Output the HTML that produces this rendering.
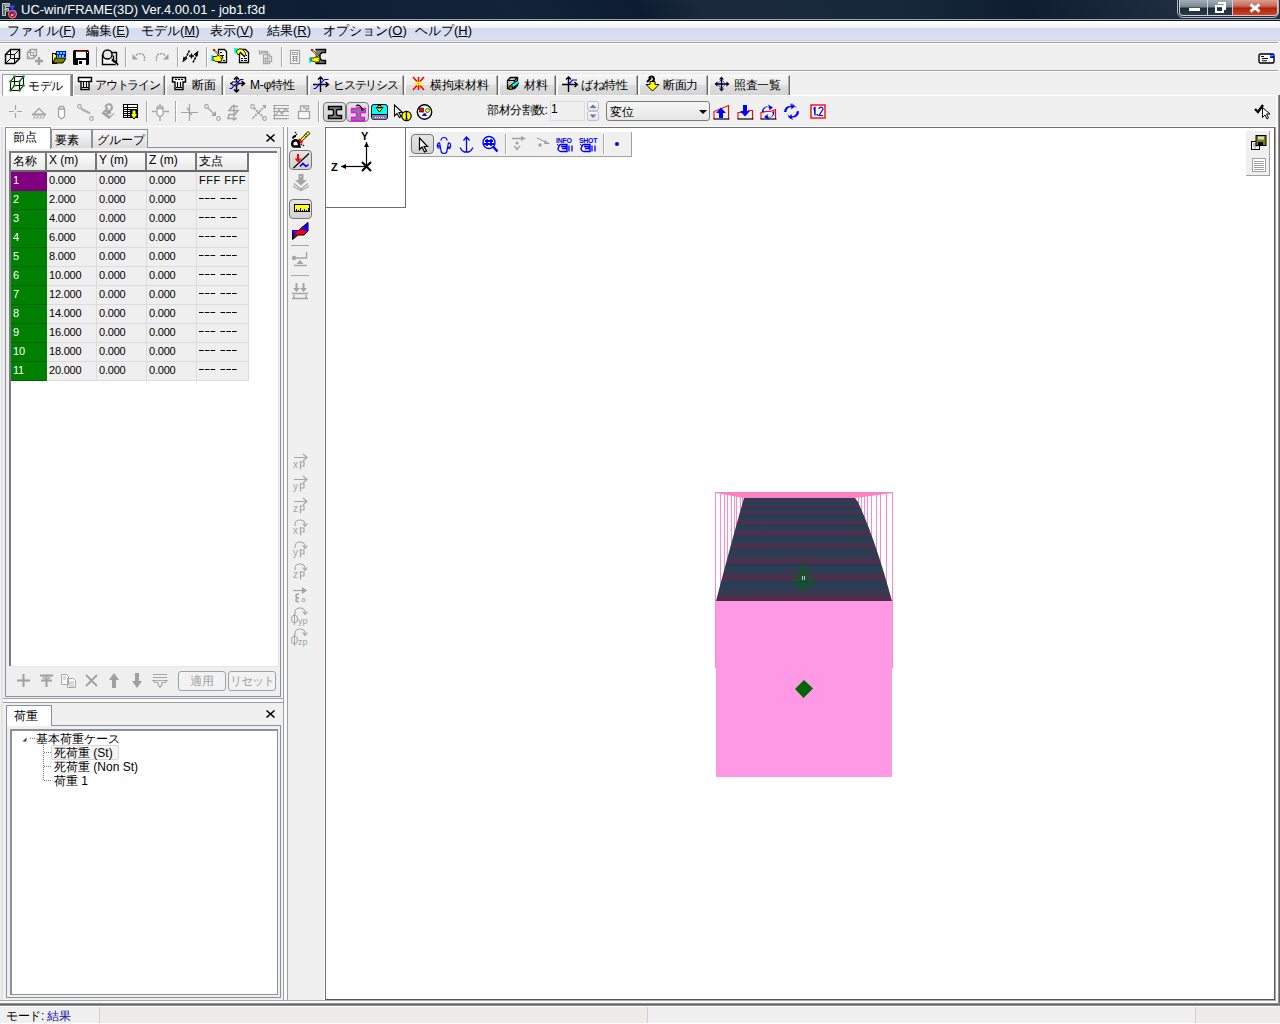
<!DOCTYPE html>
<html><head><meta charset="utf-8">
<style>
*{margin:0;padding:0;box-sizing:border-box}
html,body{width:1280px;height:1024px;overflow:hidden;background:#f0f0f0;font-family:"Liberation Sans",sans-serif;font-size:12px;color:#000}
.a{position:absolute}
svg{position:absolute;overflow:visible}
#title{left:0;top:0;width:1280px;height:21px;background:linear-gradient(60deg,#142438 0%,#0f1f33 25%,#12233a 40%,#0d1c30 50%,#1a2a3c 55%,#18283b 70%,#0e1d30 80%,#1c2c3e 90%,#223245 100%);border-bottom:1px solid #0e1620}
#title:after{content:"";position:absolute;left:0;top:19px;width:1280px;height:1px;background:#9aa4b0}
#title .t{left:21px;top:2px;color:#fff;font-size:13px}
#menu{left:0;top:21px;width:1280px;height:21px;background:linear-gradient(#ffffff 0,#f0f2f8 33%,#d5dcef 34%,#dbe1f2 90%,#b8c0d4 95%,#f0f0f0 96%)}
#menu span{position:absolute;top:1px;font-size:13px;color:#000}
.vs{position:absolute;width:2px;border-left:1px solid #a8a8a8;border-right:1px solid #fff}
.hl{position:absolute;height:2px;border-top:1px solid #a0a0a0;border-bottom:1px solid #fff}
.tab{position:absolute;top:75px;height:20px;background:linear-gradient(#f4f4f4,#ececec 45%,#dedede 50%,#d4d4d4);border-left:1px solid #fff;border-top:1px solid #fff;border-right:1px solid #6a6a6a;box-shadow:inset -1px 0 #a8a8a8;font-size:12px;white-space:nowrap;letter-spacing:-0.3px}
.tab span{position:absolute;top:1px}
.tab.act{top:74px;height:22px;background:#fff;border-bottom:none}
.tab2{position:absolute;height:19px;background:linear-gradient(#f8f8f8,#ececec 50%,#dcdcdc);border:1px solid #8c8f9c;border-bottom:none;font-size:12px;white-space:nowrap}
.tab2 span{position:absolute;top:2px}
.g{position:absolute;font-size:12px}
.cell{position:absolute;height:19px;border-right:1px solid #dcdcdc;border-bottom:1px solid #dcdcdc;background:#efefef;padding:2px 0 0 2px;white-space:nowrap;letter-spacing:-0.2px;font-size:11px;line-height:12px}
.hd{position:absolute;top:153px;height:19px;background:linear-gradient(#fcfcfc,#e8e8e8);border-right:2px solid #777;border-bottom:2px solid #666;padding:0 0 0 2px;white-space:nowrap}
.nm{background:#008000;color:#fff;border-right:1px solid #008000;border-bottom:1px solid #006400}
.btn{position:absolute;border:1px solid #9aa2ac;border-radius:3px;background:#f2f2f2;color:#a0a0a0;font-size:12px;text-align:center;padding-top:1px}
.pr{position:absolute;border:1px solid #777;border-radius:3px;background:linear-gradient(#e4e4e4,#d2d2d2)}
.vi{color:#9a9a9a;font-size:11px;position:absolute;left:291px;line-height:10px}
</style></head><body>
<!-- ===== Title bar ===== -->
<div id="title" class="a">
  <svg style="left:1px;top:2px" width="16" height="17"><path d="M1.5 1.5h7v3h-4v2h3v2.5h-3v4.5h-3z" fill="#4a6a62" stroke="#c8c8c0" stroke-width="1"/><path d="M3 3h5M3 7.5h3" stroke="#e8f0ec" stroke-width="0.8"/><path d="M8.5 4.5h4l-2 2.5" stroke="#4040ff" stroke-width="1.8" fill="none"/><circle cx="11.5" cy="12" r="4" fill="#e00000" stroke="#ffb0b0" stroke-width="0.8"/><path d="M9 10a2.5 2 0 1 1 2 3" stroke="#4060ff" stroke-width="1.5" fill="none"/><circle cx="11" cy="13" r="1" fill="#c0ffff"/></svg>
  <div class="a t">UC-win/FRAME(3D) Ver.4.00.01 - job1.f3d</div>
  <div class="a" style="left:1177px;top:-2px;width:102px;height:20px;border:1px solid #aab4be;border-radius:0 0 6px 6px"></div>
  <div class="a" style="left:1179px;top:0;width:28px;height:16px;border:1px solid #c8d0d8;border-top:none;border-right:none;border-radius:0 0 0 4px;background:linear-gradient(#a4aeb8,#7a8692 45%,#1d2b39 55%,#2c3a48)"><div class="a" style="left:9px;top:8px;width:11px;height:3px;background:#fff"></div></div>
  <div class="a" style="left:1207px;top:0;width:26px;height:16px;border:1px solid #c8d0d8;border-top:none;background:linear-gradient(#a4aeb8,#7a8692 45%,#1d2b39 55%,#2c3a48)"><div class="a" style="left:7px;top:5px;width:9px;height:8px;border:2px solid #fff"></div><div class="a" style="left:10px;top:2px;width:8px;height:8px;border-top:2px solid #fff;border-right:2px solid #fff"></div></div>
  <div class="a" style="left:1233px;top:0;width:45px;height:16px;border:1px solid #e8c0b8;border-top:none;border-left:none;border-radius:0 0 4px 0;background:linear-gradient(#d8a090,#c86a58 40%,#b02010 55%,#c84828)"><svg style="left:16px;top:3px" width="12" height="10"><path d="M1.5 1.5L10.5 8.5M10.5 1.5L1.5 8.5" stroke="#fff" stroke-width="3"/></svg></div>
</div>
<!-- ===== Menu ===== -->
<div id="menu" class="a">
  <span style="left:7px">ファイル(<u>F</u>)</span>
  <span style="left:86px">編集(<u>E</u>)</span>
  <span style="left:141px">モデル(<u>M</u>)</span>
  <span style="left:210px">表示(<u>V</u>)</span>
  <span style="left:267px">結果(<u>R</u>)</span>
  <span style="left:323px">オプション(<u>O</u>)</span>
  <span style="left:415px">ヘルプ(<u>H</u>)</span>
</div>
<div class="hl" style="left:0;top:42px;width:1278px"></div>
<!-- TOOLBAR1 -->
<svg style="left:4px;top:48px" width="17" height="17"><g fill="none" stroke="#000" stroke-width="1"><path d="M6.5 1.5h9v9h-9z M1.5 6.5h9v9h-9z M1.5 6.5l5-5 M10.5 6.5l5-5 M1.5 15.5l5-5 M10.5 15.5l5-5"/></g><path d="M1.5 6.5v9h9l5-5v-9h-9z" fill="none" stroke="#000" stroke-width="1.5"/></svg>
<svg style="left:26px;top:48px" width="18" height="18"><g fill="none" stroke="#a0a0a0" stroke-width="1"><path d="M4.5 1.5h6v6h-6z M1.5 4.5h6v6h-6z M1.5 4.5l3-3 M7.5 4.5l3-3 M1.5 10.5l3-3 M7.5 10.5l3-3"/></g><path d="M1.5 4.5v6h6l3-3v-6h-6z" fill="none" stroke="#a0a0a0" stroke-width="1.4"/><path d="M9 13h8M13 9v8" stroke="#a0a0a0" stroke-width="2.4"/></svg>
<svg style="left:51px;top:50px" width="16" height="14" shape-rendering="crispEdges"><rect x="5" y="1" width="10" height="6" fill="#0000ff"/><g fill="#00ffff"><rect x="6" y="2" width="2" height="2"/><rect x="9" y="2" width="2" height="2"/><rect x="12" y="2" width="2" height="2"/><rect x="5" y="5" width="2" height="2"/><rect x="8" y="5" width="2" height="2"/><rect x="11" y="5" width="2" height="2"/></g><path d="M1 3h3v1h1v9h-4z" fill="#ffff00" stroke="#000"/><path d="M2 13L4 8H15L12 13Z" fill="#808000" stroke="#000" shape-rendering="auto"/></svg>
<svg style="left:73px;top:50px" width="16" height="16" shape-rendering="crispEdges"><rect x="0" y="0" width="16" height="15" rx="1.5" fill="#000" shape-rendering="auto"/><rect x="3" y="1" width="10" height="7" fill="#fff"/><rect x="3" y="1" width="10" height="1" fill="#ff0000"/><rect x="5" y="10" width="8" height="5" fill="#fff"/><rect x="6" y="11" width="3" height="3" fill="#000"/><rect x="14" y="2" width="1" height="1" fill="#fff"/></svg>
<div class="vs" style="left:96px;top:47px;height:20px"></div>
<svg style="left:101px;top:49px" width="18" height="17"><path d="M1.5 5.5v10h13v-4" fill="#fff" stroke="#000" stroke-width="1.4"/><path d="M10 3.5h5.5v11M12.5 6.5v5" fill="none" stroke="#000" stroke-width="1.4"/><circle cx="6.5" cy="5.5" r="4.6" fill="#e6e6e6" stroke="#000" stroke-width="1.5"/><path d="M10 9l1 1" stroke="#e0e000" stroke-width="1.5"/><path d="M11 10.5l6 5.5" stroke="#000" stroke-width="2.2"/><path d="M13 14l3 2" stroke="#fff" stroke-width="0.8"/></svg>
<div class="vs" style="left:125px;top:47px;height:20px"></div>
<svg style="left:132px;top:52px" width="14" height="9"><path d="M4 3.5a4.5 3.5 0 0 1 8.5 1.5v4" fill="none" stroke="#a0a0a0" stroke-width="1.4" stroke-dasharray="2.5 0.8"/><path d="M0.5 2v5.5h5.5z" fill="#a0a0a0"/></svg>
<svg style="left:155px;top:52px" width="14" height="9"><path d="M10 3.5a4.5 3.5 0 0 0-8.5 1.5v4" fill="none" stroke="#a0a0a0" stroke-width="1.4" stroke-dasharray="2.5 0.8"/><path d="M13.5 2v5.5h-5.5z" fill="#a0a0a0"/></svg>
<div class="vs" style="left:177px;top:47px;height:20px"></div>
<svg style="left:182px;top:50px" width="17" height="13"><path d="M7.5 0.5l-4 8" stroke="#000" stroke-width="1.6" stroke-dasharray="2.5 0.8"/><path d="M0.5 12.5l1-6 4 2z" fill="#000"/><path d="M7 6h5M9.5 3.5v5" stroke="#000" stroke-width="1.3"/><path d="M11 12.5l4-8" stroke="#000" stroke-width="1.6" stroke-dasharray="2.5 0.8"/><path d="M16.5 0.5l-1 6-4-2z" fill="#000"/></svg>
<div class="vs" style="left:206px;top:47px;height:20px"></div>
<svg style="left:211px;top:48px" width="17" height="17"><path d="M7.5 1.5h6l2 2v11h-8z" fill="#fff" stroke="#000" stroke-width="1.3"/><path d="M9 4.5h2M10 7.5h3M10 12.5h1M12 12.5h2" stroke="#000"/><rect x="0" y="7" width="2" height="6" fill="#00ffff"/><path d="M2 8.5h3l2-1h4l1 2-2 1 1 2-2 1h-4l-2-1h-1z" fill="#ffff00" stroke="#000" stroke-width="0.8"/><path d="M3 2l9 9" stroke="#000" stroke-width="1.2"/><path d="M3.5 2.5l8 8" stroke="#ffff00" stroke-width="0.8"/><rect x="2" y="1" width="2" height="2" fill="#ff0000"/></svg>
<svg style="left:234px;top:48px" width="17" height="17"><path d="M5.5 1.5h6l3 3v10h-9z" fill="#fff" stroke="#000" stroke-width="1.3"/><path d="M7 10.5h2M10 10.5h3M7 12.5h2M10 12.5h3M12 7.5h1" stroke="#000"/><path d="M0 0h4v3l-4 3z" fill="#00ffff"/><path d="M2 3l3-2h3l3 3 1 3-2 1-4-3-2 2z" fill="#ffff00" stroke="#000" stroke-width="0.8"/><path d="M6 4l5 5" stroke="#000" stroke-width="1.2"/></svg>
<svg style="left:258px;top:49px" width="15" height="15"><path d="M1.5 1v3.5h2v-2h6v9" fill="none" stroke="#a8a8a8" stroke-width="1.3"/><path d="M5.5 5.5h6v2h2v5h-2v2h-6z" fill="none" stroke="#a8a8a8" stroke-width="1.3"/><path d="M5 9.5h7M5 12h7M7.5 8v6M9.5 8v6" stroke="#a8a8a8" stroke-width="1"/><path d="M5 3.5h4" stroke="#a8a8a8" stroke-width="1.2"/></svg>
<div class="vs" style="left:281px;top:47px;height:20px"></div>
<svg style="left:290px;top:50px" width="11" height="14"><rect x="0.5" y="0.5" width="9" height="13" fill="#fff" stroke="#a0a0a0" stroke-width="1.2"/><rect x="2.5" y="2.5" width="5" height="2" fill="none" stroke="#a0a0a0"/><path d="M2 6.5h6M2 8.5h6M2 10.5h6M3.5 6v6M6.5 6v6" stroke="#a0a0a0" stroke-width="1"/></svg>
<svg style="left:309px;top:48px" width="18" height="17"><path d="M6.5 1.5h10v3h-3.5l-2 2v4l2 2h3.5v3h-10" fill="#808080" stroke="#000" stroke-width="1.4"/><rect x="0" y="9" width="2" height="6" fill="#00ffff"/><path d="M2 10h3l2-1h3l1 1.5-1 1 1 1.5-1 1h-4l-2-1h-2z" fill="#ffff00" stroke="#000" stroke-width="0.8"/><path d="M3 2l8 8" stroke="#000" stroke-width="1.2"/><path d="M3.5 2.5l7 7" stroke="#ffff00" stroke-width="0.8"/><rect x="2" y="1" width="2" height="2" fill="#ff0000"/></svg>
<svg style="left:1258px;top:53px" width="17" height="11"><rect x="1" y="1" width="15" height="9" rx="1.5" fill="#fff" stroke="#000" stroke-width="1.4"/><path d="M3 3.5h3M4 5.5h6M4 7.8h5" stroke="#000" stroke-width="1"/><rect x="12" y="1" width="4" height="4" fill="#0000d0"/><rect x="12.5" y="2" width="3" height="1" fill="#00e0ff"/><rect x="12.5" y="3.2" width="1" height="1" fill="#00e0ff"/></svg>
<div class="hl" style="left:0;top:70px;width:1278px"></div>
<!-- TABS -->
<div class="a" style="left:0;top:95px;width:1278px;height:1px;background:#fff"></div>
<div class="tab" style="left:73px;width:92px"><span class="a" style="left:3px;top:0px"><svg width="16" height="16"><path d="M1.5 1.5h13v4h-2.5v8h-8v-8h-2.5z" fill="#fff" stroke="#000" stroke-width="1.4"/><path d="M2 5.5h12M6.5 6v6M9.5 6v6M4.5 11.5h7" stroke="#000" stroke-width="1.2"/></svg></span><span style="left:21px;letter-spacing:-1.2px">アウトライン</span></div>
<div class="tab" style="left:166px;width:57px"><span class="a" style="left:4px;top:0px"><svg width="16" height="16"><path d="M1.5 1.5h13v4.5h-2.5v7.5h-8v-7.5h-2.5z" fill="#fff" stroke="#000" stroke-width="1.4"/><path d="M4 3.5h2M7 3.5h2M10 3.5h2M6.5 6v5M9.5 6v5M5 11.5h6" stroke="#000" stroke-width="1.2"/></svg></span><span style="left:25px">断面</span></div>
<div class="tab" style="left:224px;width:84px"><span class="a" style="left:4px;top:0px"><svg width="17" height="17"><path d="M7.5 1v15M5 3.5l2.5-2.5 2.5 2.5M5 13.5l2.5 2.5 2.5-2.5M1 7.5h14M12.5 5l3 2.5-3 2.5" stroke="#000" stroke-width="1.5" fill="none"/><path d="M3 6h6v3h-6z" fill="#fff" stroke="#000" stroke-width="1"/><path d="M0.5 12.5h2l9-9h3" stroke="#0000ff" stroke-width="1.2" fill="none"/></svg></span><span style="left:25px">M-φ特性</span></div>
<div class="tab" style="left:309px;width:95px"><span class="a" style="left:3px;top:0px"><svg width="17" height="17"><path d="M7.5 16v-15M5 3.5l2.5-2.5 2.5 2.5M0 8.5h15M12.5 6l3 2.5-3 2.5" stroke="#000" stroke-width="1.4" fill="none"/><path d="M0.5 12.5h2l9-9h4" stroke="#0000ff" stroke-width="1.2" fill="none"/></svg></span><span style="left:23px;letter-spacing:-1.2px">ヒステリシス</span></div>
<div class="tab" style="left:405px;width:93px"><span class="a" style="left:6px;top:0px"><svg width="13" height="15"><path d="M1 1l4 4.5M12 1l-4 4.5M1 14l4-4.5M12 14l-4-4.5M6.5 1v13" stroke="#ff0000" stroke-width="1.6"/><path d="M3 6.5h7M3 8.5h7" stroke="#ffff00" stroke-width="1.3"/></svg></span><span style="left:24px">横拘束材料</span></div>
<div class="tab" style="left:499px;width:57px"><span class="a" style="left:6px;top:0px"><svg width="14" height="15"><path d="M1.5 4.5l3-3h7v8l-3 3h-7z" fill="#c8c8c8" stroke="#000" stroke-width="1.3"/><path d="M1.5 4.5h7v8M8.5 4.5l3-3" stroke="#000" stroke-width="1.2" fill="none"/><path d="M5 11l7-5" stroke="#000" stroke-width="4"/><path d="M5 11l7-5" stroke="#00ffff" stroke-width="2.2"/><rect x="3" y="10" width="3.5" height="3.5" fill="#808000" stroke="#000" stroke-width="0.8"/></svg></span><span style="left:24px">材料</span></div>
<div class="tab" style="left:557px;width:81px"><span class="a" style="left:4px;top:0px"><svg width="16" height="16"><path d="M6.5 16v-15M4 3.5l2.5-2.5 2.5 2.5M0 8.5h15M12.5 6l3 2.5-3 2.5" stroke="#000" stroke-width="1.4" fill="none"/><path d="M7 8l3.5-4h4.5" stroke="#0000ff" stroke-width="1.2" fill="none"/></svg></span><span style="left:23px">ばね特性</span></div>
<div class="tab" style="left:639px;width:69px"><span class="a" style="left:5px;top:0px"><svg width="15" height="16"><path d="M2 6l4-4M4 2.5a2.5 2.5 0 1 1 3 3" stroke="#000" stroke-width="2" fill="none"/><path d="M1 8.5h4v-3h5v3h4l-6.5 6.5z" fill="#ffff00" stroke="#000" stroke-width="1"/></svg></span><span style="left:23px">断面力</span></div>
<div class="tab" style="left:709px;width:81px"><span class="a" style="left:4px;top:0px"><svg width="16" height="16"><path d="M7.5 0.5l-2.5 3h5zM7.5 15.5l-2.5-3h5zM0.5 8l3-2.5v5zM15.5 8l-3-2.5v5z" fill="#000"/><path d="M7.5 3v10M3 8h10" stroke="#000" stroke-width="1.3"/><path d="M3.5 8l4-4.5 4 4.5-4 4.5z" fill="none" stroke="#0000ff" stroke-width="1" stroke-dasharray="1.2 0.8"/></svg></span><span style="left:24px">照査一覧</span></div>
<div class="tab act" style="left:2px;width:71px;border-right:2px solid #7c8088;border-left-color:#9ca0a8;border-top-color:#9ca0a8"><svg style="left:6px;top:0px" width="17" height="17"><path d="M1.5 6.5h9v9h-9z M5.5 1.5h9v9h-9z M1.5 6.5l4-5 M10.5 6.5l4-5 M1.5 15.5l4-5 M10.5 15.5l4-5" fill="none" stroke="#000" stroke-width="1.1"/><g fill="#00a000"><circle cx="1.5" cy="6.5" r="1.3"/><circle cx="10.5" cy="6.5" r="1.3"/><circle cx="5.5" cy="1.5" r="1.3"/><circle cx="14.5" cy="1.5" r="1.3"/><circle cx="1.5" cy="15.5" r="1.3"/><circle cx="10.5" cy="15.5" r="1.3"/><circle cx="5.5" cy="10.5" r="1.3"/><circle cx="14.5" cy="10.5" r="1.3"/></g></svg><span style="left:25px;top:3px;font-size:12px">モデル</span></div>
<!-- TOOLBAR2 -->
<svg style="left:8px;top:104px" width="16" height="16"><path d="M1 7.5h5M9 7.5h5M7.5 1v5M7.5 9v5" stroke="#a4a4a4" stroke-width="1.2"/></svg>
<svg style="left:31px;top:107px" width="16" height="13"><path d="M2.5 7L8 1.5 13.5 7" fill="none" stroke="#a4a4a4" stroke-width="1.3"/><path d="M1 7.5h14" stroke="#a4a4a4" stroke-width="2"/><path d="M2.5 12l2-3M5.5 12l2-3M8.5 12l2-3M11.5 12l2-3" stroke="#a4a4a4" stroke-width="1.1"/></svg>
<svg style="left:56px;top:105px" width="11" height="15"><path d="M2.5 3.5l1.5-2h3l1.5 2v8l-3 2.5-3-2.5z" fill="#fff" stroke="#a4a4a4" stroke-width="1.3"/><path d="M3 4h5" stroke="#a4a4a4" stroke-width="1.5"/></svg>
<svg style="left:77px;top:104px" width="17" height="17"><path d="M4 4l1 2 1-1 1 2 1-1 1 2 1-1 1 2 1-1 1 2" fill="none" stroke="#a4a4a4" stroke-width="1.2"/><circle cx="2.5" cy="2.5" r="1.8" fill="#fff" stroke="#a4a4a4" stroke-width="1.2"/><circle cx="14.5" cy="14.5" r="1.8" fill="#fff" stroke="#a4a4a4" stroke-width="1.2"/></svg>
<svg style="left:100px;top:104px" width="16" height="16"><path d="M3 9l5-5" stroke="#a4a4a4" stroke-width="2.2"/><path d="M6 4a3 3 0 1 1 4 2" fill="none" stroke="#a4a4a4" stroke-width="2"/><path d="M1 9h5l4 3 4-3h1l-6 6z M6 6h5v4h-5z" fill="#a4a4a4"/></svg>
<svg style="left:123px;top:104px" width="16" height="16" shape-rendering="crispEdges"><rect x="0" y="0" width="15" height="14" fill="#000"/><rect x="1" y="1" width="3" height="2" fill="#fff"/><rect x="5" y="1" width="9" height="2" fill="#fff"/><g fill="#fff"><rect x="1" y="4" width="3" height="1"/><rect x="5" y="4" width="9" height="1"/><rect x="1" y="6" width="3" height="1"/><rect x="5" y="6" width="2" height="1"/><rect x="1" y="8" width="3" height="1"/><rect x="5" y="8" width="2" height="1"/><rect x="1" y="10" width="3" height="1"/><rect x="5" y="10" width="2" height="1"/><rect x="1" y="12" width="3" height="1"/><rect x="5" y="12" width="2" height="1"/></g><path d="M9 6h4v4h2l-4 5-4-5h2z" fill="#ffff00" stroke="#000" stroke-width="1" shape-rendering="auto"/></svg>
<div class="vs" style="left:146px;top:101px;height:21px"></div>
<svg style="left:152px;top:104px" width="17" height="17"><path d="M0 7.5h4M12 7.5h5M8 0v3M8 13v4" stroke="#a4a4a4" stroke-width="1.3"/><path d="M5 3.5l1-1h4l1 1v7l-3 2.5-3-2.5z" fill="#fff" stroke="#a4a4a4" stroke-width="1.3"/><path d="M5 4.5h6" stroke="#a4a4a4" stroke-width="1.6"/></svg>
<div class="vs" style="left:175px;top:101px;height:21px"></div>
<svg style="left:181px;top:104px" width="17" height="17"><path d="M0 8.5h17M8.5 0v17" stroke="#a4a4a4" stroke-width="1.2"/><path d="M6 4l2.5 3M11 11l-2.5-2.5" stroke="#a4a4a4" stroke-width="1.2"/></svg>
<svg style="left:204px;top:104px" width="17" height="17"><circle cx="2.5" cy="2.5" r="1.8" fill="#fff" stroke="#a4a4a4" stroke-width="1.2"/><path d="M4 4l7 7" stroke="#a4a4a4" stroke-width="1.3"/><path d="M12 12v-5l-5 5z" fill="#a4a4a4"/><circle cx="14.5" cy="14.5" r="1.8" fill="#fff" stroke="#a4a4a4" stroke-width="1.2"/></svg>
<svg style="left:227px;top:104px" width="15" height="17"><path d="M11 2.5h-6l-3 4h9l-3 4h-6l-1 4h9" fill="none" stroke="#a4a4a4" stroke-width="1.5"/><circle cx="7" cy="2" r="1.6" fill="#a4a4a4"/><circle cx="7" cy="15" r="1.6" fill="#a4a4a4"/><path d="M7 4v9" stroke="#a4a4a4" stroke-width="1.4"/></svg>
<svg style="left:250px;top:104px" width="17" height="17"><path d="M2 2l13 13M15 2l-13 13" stroke="#a4a4a4" stroke-width="2" stroke-dasharray="2 1"/><circle cx="2.5" cy="2.5" r="1.8" fill="#fff" stroke="#a4a4a4" stroke-width="1.2"/><circle cx="14.5" cy="14.5" r="1.8" fill="#fff" stroke="#a4a4a4" stroke-width="1.2"/><path d="M12 1l4 0 0 4z" fill="#a4a4a4"/></svg>
<svg style="left:273px;top:104px" width="17" height="17"><path d="M0 1.5h16M0 14.5h16M1.5 1v15M0 4.5h16M0 7.5h16M0 11.5h16" stroke="#a4a4a4" stroke-width="1"/><path d="M4 16v-2M7 16v-2M10 16v-2M13 16v-2" stroke="#a4a4a4"/><path d="M3 11l3-5 3 4 3-5 3 2" stroke="#a4a4a4" stroke-width="1.3" fill="none"/></svg>
<svg style="left:297px;top:104px" width="15" height="16"><rect x="1.5" y="7.5" width="11" height="7" fill="#fff" stroke="#a4a4a4" stroke-width="1.3"/><path d="M3.5 7v-5h8v3h-2v2M6 4h3" stroke="#a4a4a4" stroke-width="1.3" fill="none"/></svg>
<div class="vs" style="left:318px;top:101px;height:21px"></div>
<div class="pr" style="left:323px;top:102px;width:23px;height:20px;border-radius:4px"><svg style="left:3px;top:2px" width="16" height="15"><path d="M1.5 1.5h13v3h-4l-1 1v4l1 1h4v3h-13v-3h4l1-1v-4l-1-1h-4z" fill="#808080" stroke="#000" stroke-width="1.4"/></svg></div>
<div class="pr" style="left:346px;top:102px;width:23px;height:20px;border-radius:4px"><svg style="left:2px;top:1px" width="18" height="17"><path d="M2.5 4.5h5l1-1h2l1 1h5v4h-4l-1 1v3l1 1h3v3h-13v-3h4l1-1v-3l-1-1h-4z" fill="#808080" stroke="#ff00ff" stroke-width="1.3"/><path d="M7 2l2-1 2 1 3 4-2 0" stroke="#000" fill="none" stroke-width="1.2"/></svg></div>
<svg style="left:371px;top:104px" width="17" height="16"><rect x="0.5" y="0.5" width="16" height="15" rx="2.5" fill="#00ffff" stroke="#000"/><path d="M1 11h15v3l-2 1.5h-11l-2-1.5z" fill="#8080c0"/><path d="M1 10.5h15" stroke="#000"/><path d="M4 13.5h9" stroke="#fff" stroke-dasharray="1 1"/><path d="M5 3.5h7l-3.5 4.5z M7 1.5h3v2.5h-3z" fill="#ffff00" stroke="#000" stroke-width="0.9"/></svg>
<svg style="left:393px;top:104px" width="19" height="18"><path d="M1.5 1v11l2.5-2.5 2.5 4 1.5-1-2-4h3.5z" fill="#fff" stroke="#000" stroke-width="1.1"/><circle cx="13.5" cy="12" r="4.7" fill="#ffff00" stroke="#000" stroke-width="1.2"/><path d="M13.5 10.5v4.5M12.5 10.5h1M12.5 15h2" stroke="#000" stroke-width="1.3"/><circle cx="13.5" cy="8.8" r="0.9"/></svg>
<svg style="left:416px;top:104px" width="17" height="17"><circle cx="8.5" cy="8" r="7.2" fill="#fff" stroke="#000" stroke-width="1.4"/><rect x="3.5" y="4" width="4" height="4" fill="#ff0000" stroke="#000" stroke-width="0.6"/><circle cx="11.5" cy="6.5" r="2" fill="#ffff00" stroke="#000" stroke-width="0.6"/><path d="M5.5 12h6l-3-3z" fill="#0000ff"/><path d="M7 8.5l1.5 1.5M10.5 8.5l-1.5 1.5" stroke="#000" stroke-width="0.6"/></svg>
<div class="a" style="left:487px;top:102px;font-size:12px;letter-spacing:-0.5px">部材分割数:</div><div class="a" style="left:551px;top:102px;font-size:12px">1</div>
<div class="a" style="left:550px;top:101px;width:35px;height:20px;border:1px solid #d8dde4;background:transparent"></div>
<div class="a" style="left:587px;top:101px;width:12px;height:10px;border:1px solid #c0c4c8;border-radius:2px;background:linear-gradient(#fafafa,#e6e6e6)"><svg style="left:1px;top:2px" width="8" height="5"><path d="M0.5 4l3.5-3.5 3.5 3.5z" fill="#5a7ab8"/></svg></div><div class="a" style="left:587px;top:111px;width:12px;height:10px;border:1px solid #c0c4c8;border-radius:2px;background:linear-gradient(#fafafa,#e6e6e6)"><svg style="left:1px;top:2px" width="8" height="5"><path d="M0.5 0.5l3.5 3.5 3.5-3.5z" fill="#5a7ab8"/></svg></div>
<div class="a" style="left:606px;top:101px;width:104px;height:20px;border:1px solid #7c7c7c;border-radius:3px;background:linear-gradient(#f6f6f6,#e6e6e6)"><span class="a" style="left:3px;top:2px;font-size:12px">変位</span><svg style="left:92px;top:8px" width="8" height="5"><path d="M0 0h8l-4 4z" fill="#000"/></svg></div>
<svg style="left:713px;top:104px" width="17" height="16"><path d="M1 15V7.5L15.5 1.5V15" fill="none" stroke="#ff0000" stroke-width="1.1"/><path d="M0.5 15h16" stroke="#000" stroke-width="1.2"/><path d="M6 14v-5h-3l5-5.5 5 5.5h-3v5z" fill="#0000ff"/></svg>
<svg style="left:737px;top:104px" width="17" height="16"><path d="M1 15V8.5h4M11 6.5h4.5V15" fill="none" stroke="#ff0000" stroke-width="1.1"/><path d="M0.5 15h16" stroke="#000" stroke-width="1.2"/><path d="M6 1h4v6h3l-5 5.5-5-5.5h3z" fill="#0000ff"/></svg>
<svg style="left:760px;top:104px" width="17" height="16"><path d="M1 15V8.5l5-1 4 0 5.5-2V15" fill="none" stroke="#ff0000" stroke-width="1.1"/><path d="M0.5 15h16" stroke="#000" stroke-width="1.2"/><path d="M2 8a5 5 0 0 1 7-5l-1-2.5 5 3-4 3 .5-2a3 3 0 0 0-5 4z M14 7a5 5 0 0 1-6 6.5l1 2.5-5-3 4-3-.5 2a3 3 0 0 0 4.5-4z" fill="#0000ff"/></svg>
<svg style="left:783px;top:103px" width="17" height="17"><path d="M1 9a6 6 0 0 1 7-6l-1-2.5 5 3-4 3 .5-2a4 4 0 0 0-5 4.5z M16 8a6 6 0 0 1-7 6.5l1 2.5-5-3 4-3-.5 2a4 4 0 0 0 5-4.5z" fill="#0000ff"/><path d="M9 0.5l4 4M5 12l3 4" stroke="#0000ff" stroke-width="0.9"/></svg>
<svg style="left:810px;top:104px" width="16" height="16"><rect x="1" y="1" width="14" height="13" fill="#fff" stroke="#ff0000" stroke-width="1.4"/><path d="M3.5 4.5l1.5-1v8" stroke="#0000ff" stroke-width="1.3"/><rect x="6.5" y="10" width="1.5" height="1.5" fill="#0000ff"/><path d="M9 5a2 1.8 0 1 1 3.5 1.2L9 11.5h4" stroke="#0000ff" stroke-width="1.2" fill="none"/></svg>
<svg style="left:1254px;top:104px" width="17" height="16"><path d="M1 5l3 3 5-7" stroke="#000" stroke-width="2.4" fill="none"/><path d="M8.5 3.5v10l2.5-2.5 2 4 1.5-1-2-4h3.5z" fill="#fff" stroke="#000" stroke-width="1"/></svg>
<div class="a" style="left:0;top:126px;width:1278px;height:1px;background:#fff"></div>
<!-- LEFTPANEL -->
<div class="a" style="left:1px;top:127px;width:2px;height:873px;background:#e4e4e4"></div>
<div class="a" style="left:5px;top:147px;width:276px;height:550px;border:1px solid #8c909c"></div>
<div class="tab2" style="left:51px;top:129px;width:41px"><span style="left:3px">要素</span></div>
<div class="tab2" style="left:92px;top:129px;width:56px"><span style="left:4px">グループ</span></div>
<div class="a" style="left:5px;top:127px;width:46px;height:22px;border:1px solid #8c909c;border-bottom:none;background:#fff"><span class="a" style="left:7px;top:1px">節点</span></div>
<svg style="left:266px;top:134px" width="9" height="8"><path d="M0.5 0.5l8 7M8.5 0.5l-8 7" stroke="#000" stroke-width="1.6"/></svg>
<div class="a" style="left:9px;top:151px;width:270px;height:516px;background:#fff;border-right:1px solid #e4e4e8;border-bottom:1px solid #e8e8ec"></div>
<div class="a" style="left:9px;top:151px;width:268px;height:2px;background:#7a7a7a"></div>
<div class="a" style="left:9px;top:151px;width:2px;height:515px;background:#7a7a7a"></div>
<div class="hd" style="left:11px;width:36px">名称</div>
<div class="hd" style="left:47px;width:50px">X (m)</div>
<div class="hd" style="left:97px;width:50px">Y (m)</div>
<div class="hd" style="left:147px;width:50px">Z (m)</div>
<div class="hd" style="left:197px;width:52px">支点</div>
<div class="cell nm pp" style="left:11px;top:172px;width:36px;background:#800080;border-right-color:#800080;border-bottom-color:#700070;">1</div>
<div class="cell" style="left:47px;top:172px;width:50px">0.000</div>
<div class="cell" style="left:97px;top:172px;width:50px">0.000</div>
<div class="cell" style="left:147px;top:172px;width:50px">0.000</div>
<div class="cell" style="left:197px;top:172px;width:52px;letter-spacing:0.5px">FFF FFF</div>
<div class="cell nm" style="left:11px;top:191px;width:36px;">2</div>
<div class="cell" style="left:47px;top:191px;width:50px">2.000</div>
<div class="cell" style="left:97px;top:191px;width:50px">0.000</div>
<div class="cell" style="left:147px;top:191px;width:50px">0.000</div>
<div class="cell" style="left:197px;top:191px;width:52px"><svg style="left:2px;top:6px" width="42" height="3"><path d="M0 1.5h4.6M5.8 1.5h4.6M11.6 1.5h4.6M21.5 1.5h4.6M27.3 1.5h4.6M33.1 1.5h4.6" stroke="#000" stroke-width="1.1"/></svg></div>
<div class="cell nm" style="left:11px;top:210px;width:36px;">3</div>
<div class="cell" style="left:47px;top:210px;width:50px">4.000</div>
<div class="cell" style="left:97px;top:210px;width:50px">0.000</div>
<div class="cell" style="left:147px;top:210px;width:50px">0.000</div>
<div class="cell" style="left:197px;top:210px;width:52px"><svg style="left:2px;top:6px" width="42" height="3"><path d="M0 1.5h4.6M5.8 1.5h4.6M11.6 1.5h4.6M21.5 1.5h4.6M27.3 1.5h4.6M33.1 1.5h4.6" stroke="#000" stroke-width="1.1"/></svg></div>
<div class="cell nm" style="left:11px;top:229px;width:36px;">4</div>
<div class="cell" style="left:47px;top:229px;width:50px">6.000</div>
<div class="cell" style="left:97px;top:229px;width:50px">0.000</div>
<div class="cell" style="left:147px;top:229px;width:50px">0.000</div>
<div class="cell" style="left:197px;top:229px;width:52px"><svg style="left:2px;top:6px" width="42" height="3"><path d="M0 1.5h4.6M5.8 1.5h4.6M11.6 1.5h4.6M21.5 1.5h4.6M27.3 1.5h4.6M33.1 1.5h4.6" stroke="#000" stroke-width="1.1"/></svg></div>
<div class="cell nm" style="left:11px;top:248px;width:36px;">5</div>
<div class="cell" style="left:47px;top:248px;width:50px">8.000</div>
<div class="cell" style="left:97px;top:248px;width:50px">0.000</div>
<div class="cell" style="left:147px;top:248px;width:50px">0.000</div>
<div class="cell" style="left:197px;top:248px;width:52px"><svg style="left:2px;top:6px" width="42" height="3"><path d="M0 1.5h4.6M5.8 1.5h4.6M11.6 1.5h4.6M21.5 1.5h4.6M27.3 1.5h4.6M33.1 1.5h4.6" stroke="#000" stroke-width="1.1"/></svg></div>
<div class="cell nm" style="left:11px;top:267px;width:36px;">6</div>
<div class="cell" style="left:47px;top:267px;width:50px">10.000</div>
<div class="cell" style="left:97px;top:267px;width:50px">0.000</div>
<div class="cell" style="left:147px;top:267px;width:50px">0.000</div>
<div class="cell" style="left:197px;top:267px;width:52px"><svg style="left:2px;top:6px" width="42" height="3"><path d="M0 1.5h4.6M5.8 1.5h4.6M11.6 1.5h4.6M21.5 1.5h4.6M27.3 1.5h4.6M33.1 1.5h4.6" stroke="#000" stroke-width="1.1"/></svg></div>
<div class="cell nm" style="left:11px;top:286px;width:36px;">7</div>
<div class="cell" style="left:47px;top:286px;width:50px">12.000</div>
<div class="cell" style="left:97px;top:286px;width:50px">0.000</div>
<div class="cell" style="left:147px;top:286px;width:50px">0.000</div>
<div class="cell" style="left:197px;top:286px;width:52px"><svg style="left:2px;top:6px" width="42" height="3"><path d="M0 1.5h4.6M5.8 1.5h4.6M11.6 1.5h4.6M21.5 1.5h4.6M27.3 1.5h4.6M33.1 1.5h4.6" stroke="#000" stroke-width="1.1"/></svg></div>
<div class="cell nm" style="left:11px;top:305px;width:36px;">8</div>
<div class="cell" style="left:47px;top:305px;width:50px">14.000</div>
<div class="cell" style="left:97px;top:305px;width:50px">0.000</div>
<div class="cell" style="left:147px;top:305px;width:50px">0.000</div>
<div class="cell" style="left:197px;top:305px;width:52px"><svg style="left:2px;top:6px" width="42" height="3"><path d="M0 1.5h4.6M5.8 1.5h4.6M11.6 1.5h4.6M21.5 1.5h4.6M27.3 1.5h4.6M33.1 1.5h4.6" stroke="#000" stroke-width="1.1"/></svg></div>
<div class="cell nm" style="left:11px;top:324px;width:36px;">9</div>
<div class="cell" style="left:47px;top:324px;width:50px">16.000</div>
<div class="cell" style="left:97px;top:324px;width:50px">0.000</div>
<div class="cell" style="left:147px;top:324px;width:50px">0.000</div>
<div class="cell" style="left:197px;top:324px;width:52px"><svg style="left:2px;top:6px" width="42" height="3"><path d="M0 1.5h4.6M5.8 1.5h4.6M11.6 1.5h4.6M21.5 1.5h4.6M27.3 1.5h4.6M33.1 1.5h4.6" stroke="#000" stroke-width="1.1"/></svg></div>
<div class="cell nm" style="left:11px;top:343px;width:36px;">10</div>
<div class="cell" style="left:47px;top:343px;width:50px">18.000</div>
<div class="cell" style="left:97px;top:343px;width:50px">0.000</div>
<div class="cell" style="left:147px;top:343px;width:50px">0.000</div>
<div class="cell" style="left:197px;top:343px;width:52px"><svg style="left:2px;top:6px" width="42" height="3"><path d="M0 1.5h4.6M5.8 1.5h4.6M11.6 1.5h4.6M21.5 1.5h4.6M27.3 1.5h4.6M33.1 1.5h4.6" stroke="#000" stroke-width="1.1"/></svg></div>
<div class="cell nm" style="left:11px;top:362px;width:36px;">11</div>
<div class="cell" style="left:47px;top:362px;width:50px">20.000</div>
<div class="cell" style="left:97px;top:362px;width:50px">0.000</div>
<div class="cell" style="left:147px;top:362px;width:50px">0.000</div>
<div class="cell" style="left:197px;top:362px;width:52px"><svg style="left:2px;top:6px" width="42" height="3"><path d="M0 1.5h4.6M5.8 1.5h4.6M11.6 1.5h4.6M21.5 1.5h4.6M27.3 1.5h4.6M33.1 1.5h4.6" stroke="#000" stroke-width="1.1"/></svg></div>
<div class="a" style="left:9px;top:667px;width:270px;height:28px;background:#efefef"></div>
<svg style="left:17px;top:674px" width="13" height="13"><path d="M6.5 0v13M0 6.5h13" stroke="#a0a0a0" stroke-width="2"/></svg>
<svg style="left:40px;top:674px" width="13" height="13"><path d="M0 1.5h13M1 6.5h11M6.5 2v11" stroke="#a0a0a0" stroke-width="2"/><path d="M3 3l2 2M10 3l-2 2" stroke="#a0a0a0" stroke-width="1.5"/></svg>
<svg style="left:61px;top:674px" width="15" height="14"><path d="M0.5 0.5h5l2 2v8h-7z M6.5 4.5h6l2 2v7h-8z" fill="#fff" stroke="#a8a8a8"/><path d="M8 8h5M8 10h5M8 12h5M2 3h3M2 5h3" stroke="#b0b0b0"/></svg>
<svg style="left:85px;top:674px" width="13" height="13"><path d="M1 1l11 11M12 1l-11 11" stroke="#a0a0a0" stroke-width="1.8"/></svg>
<svg style="left:109px;top:673px" width="10" height="15"><path d="M5 0l5 7h-3v8h-4v-8h-3z" fill="#a0a0a0"/></svg>
<svg style="left:132px;top:673px" width="10" height="15"><path d="M5 15l5-7h-3v-8h-4v8h-3z" fill="#a0a0a0"/></svg>
<svg style="left:152px;top:673px" width="16" height="15"><path d="M1 1.5h14M1 4.5h14M1 7.5h14l-2 2h-3v2l-2 3-2-3v-2h-3z" fill="none" stroke="#a8a8a8" stroke-width="1.2"/></svg>
<div class="btn" style="left:178px;top:671px;width:48px;height:20px">適用</div>
<div class="btn" style="left:228px;top:671px;width:48px;height:20px;white-space:nowrap;overflow:hidden;letter-spacing:-1px">リセット</div>
<div class="a" style="left:3px;top:698px;width:281px;height:5px;border-top:1px solid #a0a0a0;border-bottom:1px solid #a0a0a0;background:#fafafa"></div>
<div class="a" style="left:283px;top:127px;width:5px;height:874px;border-left:1px solid #a0a0a0;border-right:1px solid #a0a0a0;background:#fafafa"></div>
<!-- load panel -->
<div class="a" style="left:6px;top:725px;width:275px;height:273px;border:1px solid #8c909c"></div>
<div class="a" style="left:6px;top:705px;width:46px;height:21px;border:1px solid #8c909c;border-bottom:none;background:#fff"><span class="a" style="left:7px;top:2px">荷重</span></div>
<svg style="left:266px;top:710px" width="9" height="8"><path d="M0.5 0.5l8 7M8.5 0.5l-8 7" stroke="#000" stroke-width="1.6"/></svg>
<div class="a" style="left:10px;top:729px;width:268px;height:266px;border:2px solid #8c909c;border-right-width:1px;border-bottom-width:1px;background:#fff"></div>
<svg style="left:20px;top:734px" width="60" height="50"><path d="M2.5 7.5l4-4v4z" fill="#444"/><path d="M10 4.5h5M23.5 11v36M24 18.5h8M24 32.5h8M24 46.5h8" stroke="#777" stroke-dasharray="1 1"/></svg>
<div class="a" style="left:36px;top:731px;font-size:12px">基本荷重ケース</div>
<div class="a" style="left:51px;top:745px;width:68px;height:15px;border:1px solid #d8d8d8;border-radius:2px;background:#f4f4f4"></div>
<div class="a" style="left:54px;top:745px;font-size:12px">死荷重 (St)</div>
<div class="a" style="left:54px;top:759px;font-size:12px">死荷重 (Non St)</div>
<div class="a" style="left:54px;top:773px;font-size:12px">荷重 1</div>

<!-- VTOOLBAR -->
<svg style="left:290px;top:129px" width="20" height="19"><path d="M9 12L18 2.5l2 2L11 13z" fill="#ffff00" stroke="#000" stroke-width="0.9"/><path d="M14 6l2 2M15.5 4.5l2 2" stroke="#000" stroke-width="0.7"/><path d="M9 12l2 1-1.5 1.5-2.5-1z" fill="#ff0000" stroke="#000" stroke-width="0.6"/><path d="M8.5 10.5l3.5 3.5" stroke="#ff0000" stroke-width="3"/><path d="M3.5 17.5c-2-1-2-5 1-6 2-.6 3.6.4 4 2l1 4z" fill="#fff" stroke="#000" stroke-width="2.4"/><path d="M3 9.5c0-2 1.5-2.5 3-2.5" stroke="#000" stroke-width="2" fill="none"/><circle cx="5.5" cy="3.5" r="0.8"/><circle cx="6.5" cy="5.5" r="0.8"/><circle cx="11.5" cy="15.5" r="0.8"/><circle cx="13.5" cy="16.5" r="0.8"/></svg>
<div class="pr" style="left:289px;top:150px;width:23px;height:20px;border-radius:4px"><svg style="left:2px;top:1px" width="18" height="17"><path d="M1.5 16L17 1.5" stroke="#000" stroke-width="1.2"/><path d="M6 2v5" stroke="#ff0000" stroke-width="2"/><path d="M2.5 6.5h7l-3.5 4z" fill="#ff0000"/><path d="M8 14.5l3-3 3 3 2.5-2" stroke="#0000ff" stroke-width="1.6" fill="none"/></svg></div>
<svg style="left:293px;top:174px" width="16" height="17"><path d="M5.5 0h5v6h3.5l-6 5.5-6-5.5h3.5z" fill="#a4a4a4"/><path d="M1 9.5l7 5.5 7-5.5M1 11.5v1.5l7 3.5 7-3.5v-1.5" stroke="#a4a4a4" stroke-width="1.2" fill="none"/><rect x="7" y="2" width="1" height="1" fill="#fff"/></svg>
<div class="pr" style="left:289px;top:199px;width:23px;height:20px;border-radius:4px"><svg style="left:4px;top:4px" width="16" height="9" shape-rendering="crispEdges"><rect x="0" y="0" width="16" height="8" fill="#000"/><rect x="1" y="1" width="14" height="6" fill="#ffff00"/><path d="M2 7v-2M4 7v-1M6 7v-3M8 7v-1M10 7v-2M12 7v-1M14 7v-3" stroke="#000"/></svg></div>
<svg style="left:291px;top:222px" width="18" height="17"><path d="M1.5 8.5h6l2-2 7.5-6v8.5l-4 4h-6l-3 2.5-2.5 2z" fill="#ff0000" stroke="#000" stroke-width="1"/><path d="M9.5 8.5l7.5-8v8z" fill="#0000ff"/><path d="M1.5 8.5h6l-2 2h-4z" fill="#8000ff"/><path d="M1.5 10.5v5.5l4-5.5z" fill="#0000ff"/><path d="M1.5 8.5v8l4-4" stroke="#000" fill="none" stroke-width="1"/></svg>
<div class="a" style="left:291px;top:245px;width:18px;height:1px;background:#a8a8a8"></div>
<svg style="left:291px;top:252px" width="18" height="16"><circle cx="3" cy="6" r="2.2" fill="#a4a4a4"/><path d="M3 6h13M15.5 0v6.5" stroke="#a4a4a4" stroke-width="1.4"/><path d="M9 8l-3.5 4h7z" fill="#a4a4a4"/><path d="M3 13.5h13" stroke="#a4a4a4" stroke-width="1.4"/></svg>
<div class="a" style="left:291px;top:275px;width:18px;height:1px;background:#a8a8a8"></div>
<svg style="left:291px;top:283px" width="18" height="17"><path d="M4.5 0v5h-2.5l3.5 4 3.5-4h-2.5v-5zM11.5 0v5h-2.5l3.5 4 3.5-4h-2.5v-5z" fill="#a4a4a4"/><path d="M1 10.5h16M1 15.5h16M3 12v3M15 12v3" stroke="#a4a4a4" stroke-width="1.5"/></svg>
<svg style="left:292px;top:452px" width="18" height="18"><path d="M2 5.5h13M11 2l4 3.5-4 3.5" stroke="#a4a4a4" fill="none" stroke-width="1.1"/><text x="1" y="16" font-size="10" fill="#a4a4a4" font-family="Liberation Sans">x</text><path d="M8.5 9v8.5M8.5 10h3.5v4h-3.5" stroke="#a4a4a4" fill="none" stroke-width="1.1"/></svg>
<svg style="left:292px;top:474px" width="18" height="18"><path d="M2 5.5h13M11 2l4 3.5-4 3.5" stroke="#a4a4a4" fill="none" stroke-width="1.1"/><text x="1" y="16" font-size="10" fill="#a4a4a4" font-family="Liberation Sans">y</text><path d="M8.5 9v8.5M8.5 10h3.5v4h-3.5" stroke="#a4a4a4" fill="none" stroke-width="1.1"/></svg>
<svg style="left:292px;top:496px" width="18" height="18"><path d="M2 5.5h13M11 2l4 3.5-4 3.5" stroke="#a4a4a4" fill="none" stroke-width="1.1"/><text x="1" y="16" font-size="10" fill="#a4a4a4" font-family="Liberation Sans">z</text><path d="M8.5 9v8.5M8.5 10h3.5v4h-3.5" stroke="#a4a4a4" fill="none" stroke-width="1.1"/></svg>
<svg style="left:292px;top:518px" width="18" height="18"><path d="M3 8V6a5 4 0 0 1 10 0v2M10.5 5.5l2.5 3 2.5-3" stroke="#a4a4a4" fill="none" stroke-width="1.1"/><text x="1" y="16" font-size="10" fill="#a4a4a4" font-family="Liberation Sans">x</text><path d="M8.5 9v8.5M8.5 10h3.5v4h-3.5" stroke="#a4a4a4" fill="none" stroke-width="1.1"/></svg>
<svg style="left:292px;top:540px" width="18" height="18"><path d="M3 8V6a5 4 0 0 1 10 0v2M10.5 5.5l2.5 3 2.5-3" stroke="#a4a4a4" fill="none" stroke-width="1.1"/><text x="1" y="16" font-size="10" fill="#a4a4a4" font-family="Liberation Sans">y</text><path d="M8.5 9v8.5M8.5 10h3.5v4h-3.5" stroke="#a4a4a4" fill="none" stroke-width="1.1"/></svg>
<svg style="left:292px;top:562px" width="18" height="18"><path d="M3 8V6a5 4 0 0 1 10 0v2M10.5 5.5l2.5 3 2.5-3" stroke="#a4a4a4" fill="none" stroke-width="1.1"/><text x="1" y="16" font-size="10" fill="#a4a4a4" font-family="Liberation Sans">z</text><path d="M8.5 9v8.5M8.5 10h3.5v4h-3.5" stroke="#a4a4a4" fill="none" stroke-width="1.1"/></svg>
<svg style="left:291px;top:585px" width="18" height="18"><path d="M2 5.5h13" stroke="#a4a4a4" stroke-width="1.2"/><path d="M11 2l5 3.5-5 3.5z" fill="#a4a4a4"/><path d="M8 9a3 2 0 1 0 0 4a3 2 0 1 0 0 4" stroke="#a4a4a4" fill="none" stroke-width="1.6"/><text x="10" y="17" font-size="8" fill="#a4a4a4" font-family="Liberation Sans">a</text></svg>
<svg style="left:290px;top:606px" width="20" height="20"><path d="M5 8V6a5 4 0 0 1 10 0v2M12.5 5.5l2.5 3 2.5-3" stroke="#a4a4a4" fill="none" stroke-width="1.1"/><ellipse cx="4.5" cy="13" rx="3" ry="4" stroke="#a4a4a4" fill="none"/><path d="M4.5 7v12" stroke="#a4a4a4"/><text x="8" y="18" font-size="9" fill="#a4a4a4" font-family="Liberation Sans">yp</text></svg>
<svg style="left:290px;top:627px" width="20" height="20"><path d="M5 8V6a5 4 0 0 1 10 0v2M12.5 5.5l2.5 3 2.5-3" stroke="#a4a4a4" fill="none" stroke-width="1.1"/><ellipse cx="4.5" cy="13" rx="3" ry="4" stroke="#a4a4a4" fill="none"/><path d="M4.5 7v12" stroke="#a4a4a4"/><text x="8" y="18" font-size="9" fill="#a4a4a4" font-family="Liberation Sans">zp</text></svg>
<div class="a" style="left:324px;top:126px;width:1px;height:874px;background:#fff"></div>
<!-- VIEWPORT -->
<div class="a" style="left:325px;top:127px;width:950px;height:873px;background:#fff;border-left:1px solid #6e6e6e;border-top:1px solid #6e6e6e;border-right:1px solid #555;border-bottom:1px solid #555"></div>
<div class="a" style="left:1276px;top:95px;width:4px;height:908px;background:linear-gradient(90deg,#f8f8f8 0,#f8f8f8 50%,#909090 50%,#909090 75%,#666 75%)"></div><div class="a" style="left:1275px;top:127px;width:1px;height:874px;background:#a8a8a8"></div>
<div class="a" style="left:0;top:1000px;width:1276px;height:1px;background:#a8a8a8"></div><div class="a" style="left:0;top:1001px;width:1276px;height:2px;background:#fafafa"></div><div class="a" style="left:0;top:1003px;width:1280px;height:3px;background:linear-gradient(#909090 0,#909090 33%,#666 33%,#666 67%,#909090 67%)"></div><div class="a" style="left:0;top:1006px;width:1280px;height:1px;background:#fff"></div>
<div class="a" style="left:325px;top:127px;width:81px;height:81px;border-right:1px solid #6e6e6e;border-bottom:1px solid #6e6e6e;border-left:1px solid #6e6e6e;border-top:1px solid #6e6e6e"></div>
<svg style="left:328px;top:129px" width="50" height="45"><text x="33" y="11" font-size="11" font-weight="bold" font-family="Liberation Sans">Y</text><path d="M38.5 13v25" stroke="#000" stroke-width="1.2"/><path d="M36 18l2.5-5 2.5 5z" fill="#000"/><path d="M13 37.5h25" stroke="#000" stroke-width="1.2"/><path d="M18 35l-5 2.5 5 2.5z" fill="#000"/><text x="3" y="42" font-size="11" font-weight="bold" font-family="Liberation Sans">Z</text><path d="M34 33l9 9M43 33l-9 9" stroke="#000" stroke-width="2"/></svg>
<!-- floating toolbar -->
<div class="a" style="left:409px;top:132px;width:223px;height:25px;background:#f0f0f0;border-right:1px solid #a0a0a0;border-bottom:1px solid #a0a0a0"></div>
<div class="pr" style="left:411px;top:134px;width:23px;height:20px;border-radius:4px"><svg style="left:6px;top:2px" width="12" height="16"><path d="M1.5 1v11.5l2.5-2.5 2.5 5 2-1-2.5-4.5h3.5z" fill="#fff" stroke="#000" stroke-width="1.2"/></svg></div>
<svg style="left:436px;top:136px" width="16" height="17"><path d="M5 4.5a3 3 0 0 1 6 0M3.5 6.5l1.5 8a3 3 0 0 0 6 0l1.5-8M12.5 6.5c3 1 3 5 0 6M3.5 6.5c-3 1-3 5 0 6" stroke="#0000ff" stroke-width="1.2" fill="none"/><path d="M2 9l2 2M11 13l2-2 1 2" stroke="#0000ff" stroke-width="1.2" fill="none"/></svg>
<svg style="left:459px;top:136px" width="15" height="17"><path d="M7.5 1v15M4.5 4.5l3-3.5 3 3.5M1 11.5l2 3 2.5 1.5h4l2.5-1.5 2-3" stroke="#0000ff" stroke-width="1.3" fill="none"/></svg>
<svg style="left:482px;top:136px" width="17" height="17"><circle cx="7" cy="6.5" r="6" fill="#fff" stroke="#0000ff" stroke-width="1.4"/><path d="M3 5h8M2 8h10M5 3v7M9 3v7" stroke="#0000ff" stroke-width="1.8"/><path d="M11 10.5l4.5 5" stroke="#0000ff" stroke-width="2.4"/></svg>
<div class="vs" style="left:505px;top:134px;height:20px"></div>
<svg style="left:511px;top:136px" width="16" height="16"><path d="M1 2.5h10" stroke="#a4a4a4" stroke-width="1.5"/><path d="M10 0l5 2.5-5 2.5z" fill="#a4a4a4"/><circle cx="6" cy="7" r="1.6" fill="#a4a4a4"/><path d="M3 10l3 3 3-3" stroke="#a4a4a4" fill="none" stroke-width="1.3"/><circle cx="6" cy="13" r="1.2" fill="#a4a4a4"/></svg>
<svg style="left:536px;top:137px" width="15" height="12"><path d="M1 1l9 4" stroke="#a4a4a4" stroke-width="1.2"/><path d="M9 3l5 4-6 0z" fill="#a4a4a4"/><circle cx="4" cy="8" r="1.8" fill="#a4a4a4"/></svg>
<svg style="left:556px;top:136px" width="18" height="17"><text x="0" y="6.5" font-size="7" font-weight="bold" fill="#0000ff" font-family="Liberation Sans" letter-spacing="-0.3">INFO</text><path d="M3 10.5a2 2 0 0 1 2-2h6v7h-6a3 3 0 0 1-3-3z M5 10.5h5v2h-4" stroke="#0000ff" stroke-width="1.4" fill="none"/><path d="M13 9.5v6M16 9.5v6" stroke="#0000ff" stroke-width="1.3"/><path d="M1 8l2 2" stroke="#0000ff"/></svg>
<svg style="left:579px;top:136px" width="18" height="17"><text x="0" y="6.5" font-size="7" font-weight="bold" fill="#0000ff" font-family="Liberation Sans" letter-spacing="-0.3">SHOT</text><path d="M3 10.5a2 2 0 0 1 2-2h6v7h-6a3 3 0 0 1-3-3z M5 10.5h5v2h-4" stroke="#0000ff" stroke-width="1.4" fill="none"/><path d="M13 9.5v6M16 9.5v6" stroke="#0000ff" stroke-width="1.3"/><path d="M1 8l2 2" stroke="#0000ff"/></svg>
<div class="vs" style="left:603px;top:134px;height:20px"></div>
<div class="a" style="left:615px;top:142px;width:4px;height:4px;border-radius:2px;background:#0000ff"></div>
<!-- right mini toolbar -->
<div class="a" style="left:1246px;top:131px;width:24px;height:45px;background:#f0f0f0;border-right:1px solid #a0a0a0;border-bottom:1px solid #a0a0a0"></div>
<svg style="left:1251px;top:135px" width="16" height="16"><rect x="0.5" y="6.5" width="8" height="8" fill="#fff" stroke="#000"/><path d="M2 9h5M2 11h5M4 8v6" stroke="#999"/><rect x="5" y="0.5" width="10" height="10" fill="#808000" stroke="#000"/><rect x="7" y="1.5" width="6" height="3" fill="#d8d8d8"/><rect x="7" y="7" width="5" height="3" fill="#000"/></svg>
<svg style="left:1251px;top:157px" width="16" height="16"><rect x="1.5" y="1.5" width="13" height="13" fill="#fff" stroke="#a0a0a0"/><path d="M3 4.5h10M3 6.5h10M3 8.5h10M3 10.5h10M3 12.5h10" stroke="#a0a0a0"/></svg>
<!-- structure -->
<svg style="left:700px;top:480px" width="200" height="300">
  <defs>
    <linearGradient id="st" x1="0" y1="0" x2="0" y2="1"><stop offset="0" stop-color="#1c4156"/><stop offset="0.5" stop-color="#363a52"/><stop offset="1" stop-color="#562a48"/></linearGradient>
    <clipPath id="tz"><path d="M44 18Q33 56 16 121H192Q175 58.5 158 22L155 18Z"/></clipPath>
  </defs>
  <path d="M20.5 12v110M24.5 12v110M27.5 12v110M31.5 12v110M34.5 12v110M36.5 12v110M40.5 12v110M42.5 12v110M186.5 12v110M180.5 12v110M176.5 12v110M171.5 12v110M167.5 12v110M164.5 12v110M161.5 12v110M158.5 12v110" stroke="#ff88cc" stroke-width="1"/>
  <path d="M15.5 12v176M192.5 12v176" stroke="#ff88cc"/>
  <path d="M15 12H193V13L155 18H44L16 13H15Z" fill="#ff80c0"/>
  <g clip-path="url(#tz)"><rect x="10" y="18" width="190" height="4" fill="url(#st)"/><rect x="10" y="22" width="190" height="6" fill="url(#st)"/><rect x="10" y="28" width="190" height="7" fill="url(#st)"/><rect x="10" y="35" width="190" height="10" fill="url(#st)"/><rect x="10" y="45" width="190" height="11" fill="url(#st)"/><rect x="10" y="56" width="190" height="13" fill="url(#st)"/><rect x="10" y="69" width="190" height="15" fill="url(#st)"/><rect x="10" y="84" width="190" height="17" fill="url(#st)"/><rect x="10" y="101" width="190" height="20" fill="url(#st)"/></g>
  <rect x="16" y="121" width="176" height="176" fill="#ff99e6"/>
  <g stroke="#006800" stroke-width="1.2" fill="none"><path d="M103.5 87.5L94.5 100.5L104 109.5L113.5 100.5Z M96 96h15 M103.5 87.5v22 M94.5 100.5h19"/></g>
  <path d="M102.5 96v4M104.5 96v4" stroke="#80e0ff" stroke-width="1"/>
  <circle cx="102.5" cy="83.5" r="0.8" fill="#006800"/>
  <path d="M104 200L113 208.5L103.5 218L95 209Z" fill="#006600"/>
</svg>

<!-- STATUS -->
<div class="a" style="left:0;top:1007px;width:1280px;height:16px;background:#f0f0f0"></div>
<div class="a" style="left:100px;top:1007px;width:548px;height:16px;background:#efebea"></div>
<div class="a" style="left:1196px;top:1007px;width:84px;height:16px;background:#efebea"></div>
<div class="a" style="left:99px;top:1007px;width:1px;height:16px;background:#d0d0d0"></div>
<div class="a" style="left:647px;top:1007px;width:1px;height:16px;background:#d0d0d0"></div>
<div class="a" style="left:1195px;top:1007px;width:1px;height:16px;background:#d0d0d0"></div>
<div class="a" style="left:0;top:1023px;width:1280px;height:1px;background:#fff"></div>
<div class="a" style="left:6px;top:1008px;font-size:12px;letter-spacing:-0.3px">モード: <span style="color:#1010a0">結果</span></div>
</body></html>
